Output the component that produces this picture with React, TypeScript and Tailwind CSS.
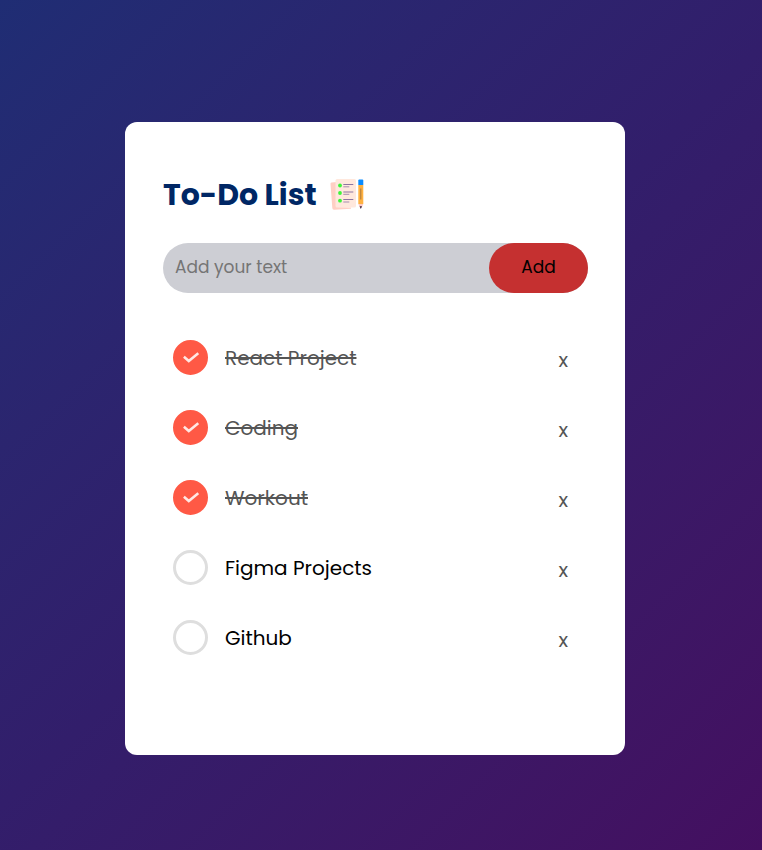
import { useState, type FormEvent } from "react";

type Task = { id: number; text: string; done: boolean };

const initialTasks: Task[] = [
  { id: 1, text: "React Project", done: true },
  { id: 2, text: "Coding", done: true },
  { id: 3, text: "Workout", done: true },
  { id: 4, text: "Figma Projects", done: false },
  { id: 5, text: "Github", done: false },
];

function NotesIcon() {
  return (
    <svg viewBox="0 0 36 36" className="size-9" aria-hidden="true">
      <path d="M2.4 5.5 8 5v25l14 .4v1.3L5.3 32.8a1.8 1.8 0 0 1-2-1.7L1.5 7a1.5 1.5 0 0 1 .9-1.5Z" fill="#ffcfc4" />
      <rect x="6.5" y="2" width="20.5" height="28.5" rx="1.5" fill="#ffe8dd" />
      <g fill="#3df53a">
        <circle cx="11" cy="8.5" r="1.9" />
        <circle cx="11" cy="16" r="1.9" />
        <circle cx="11" cy="23.7" r="1.9" />
      </g>
      <g stroke="#8d75a0" strokeWidth="1">
        <path d="M14.3 7.5h10M14.3 15h10M14.3 22.5h10" />
        <path d="M14.3 9.8h6M14.3 17.3h6M14.3 25h6" stroke="#a58db0" />
      </g>
      <path d="M29.3 3.5a1 1 0 0 1 1-1h3a1 1 0 0 1 1 1V8h-5Z" fill="#0a8cff" />
      <path d="M29.3 8h5v19h-5Z" fill="#ffb140" />
      <path d="M31.8 11.5v11" stroke="#a5753c" strokeWidth="1" />
      <path d="M29.3 27h5l-1.5 3.5h-2Z" fill="#ffc9c4" />
      <path d="M30.6 29.3h2.4L31.8 32Z" fill="#34203c" />
    </svg>
  );
}

function TaskRow({ task, onToggle, onRemove }: { task: Task; onToggle: () => void; onRemove: () => void }) {
  return (
    <li className="flex h-[70px] items-center justify-between pl-[10px] pr-4">
      <label className="flex cursor-pointer items-center gap-[17px]">
        <span className="grid size-[35px] place-items-center">
          <input
            type="checkbox"
            checked={task.done}
            onChange={onToggle}
            className="peer col-start-1 row-start-1 size-[35px] appearance-none rounded-full border-3 border-[#dedede] checked:border-[#ff5945] checked:bg-[#ff5945]"
          />
          <svg viewBox="0 0 16 12" className="pointer-events-none invisible col-start-1 row-start-1 h-3 w-4 peer-checked:visible" fill="none" stroke="#ffe8e4" strokeWidth="2.6" strokeLinejoin="miter" aria-hidden="true">
            <path d="M.9 5.8 5.8 10 15.3 2.2" />
          </svg>
        </span>
        <span className={task.done ? "pt-px text-xl text-[#555] line-through decoration-2" : "pt-px text-xl text-black"}>{task.text}</span>
      </label>
      <button type="button" aria-label={"Remove " + task.text} onClick={onRemove} className="cursor-pointer px-1 pt-[6px] text-xl text-[#555]">
        x
      </button>
    </li>
  );
}

export default function App() {
  const [tasks, setTasks] = useState(initialTasks);
  const [draft, setDraft] = useState("");

  const addTask = (event: FormEvent) => {
    event.preventDefault();
    if (!draft.trim()) return;
    setTasks([...tasks, { id: Date.now(), text: draft.trim(), done: false }]);
    setDraft("");
  };

  return (
    <main className="flex min-h-screen items-start justify-center bg-linear-135 from-[#1f2d74] via-[#321e6b] to-[#440f60] pt-[122px] pr-3 pb-[95px] font-[Poppins,Inter,sans-serif]">
      <section className="w-full max-w-[500px] rounded-xl bg-white pt-[55px] pr-[37px] pb-[83px] pl-[38px]">
        <h1 className="mb-[30px] flex items-center gap-3 text-[30px] leading-9 font-bold text-[#002765]">
          To-Do List
          <NotesIcon />
        </h1>
        <form onSubmit={addTask} className="mb-[29px] flex h-[50px] rounded-full bg-[#cdced4]">
          <input
            aria-label="New task"
            value={draft}
            onChange={(event) => setDraft(event.target.value)}
            placeholder="Add your text"
            className="min-w-0 flex-1 bg-transparent px-3 text-[17px] outline-none placeholder:text-[#757575]"
          />
          <button type="submit" className="w-[99px] cursor-pointer rounded-full bg-[#c53030] text-[17px] text-black">
            Add
          </button>
        </form>
        <ul>
          {tasks.map((task) => (
            <TaskRow
              key={task.id}
              task={task}
              onToggle={() => setTasks(tasks.map((t) => (t.id === task.id ? { ...t, done: !t.done } : t)))}
              onRemove={() => setTasks(tasks.filter((t) => t.id !== task.id))}
            />
          ))}
        </ul>
      </section>
    </main>
  );
}
